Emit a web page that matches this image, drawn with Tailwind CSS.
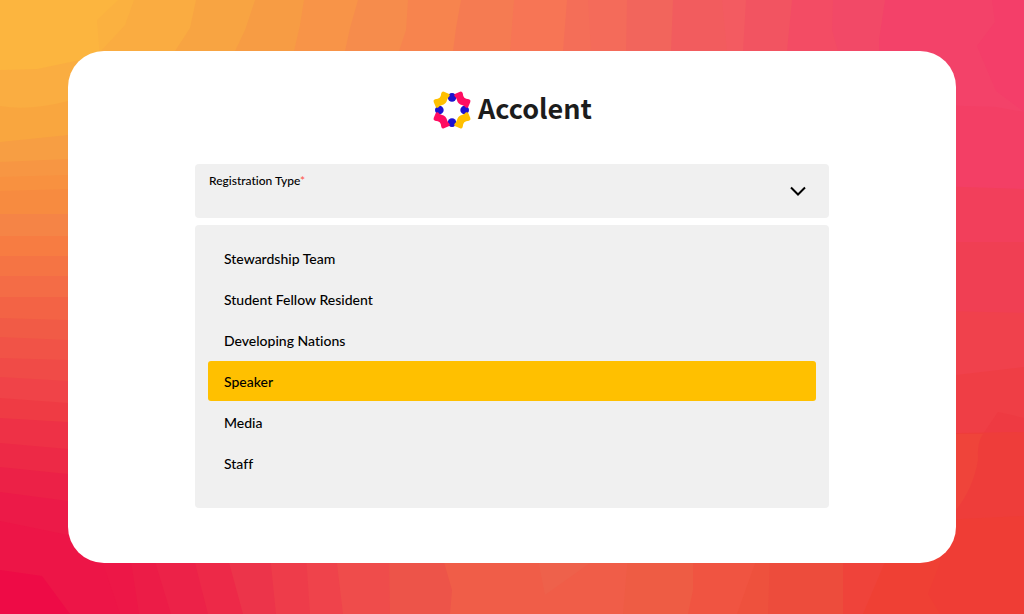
<!DOCTYPE html>
<html lang="en">
<head>
  <meta charset="UTF-8">
  <title>Accolent - Registration</title>
  <meta name="viewport" content="width=device-width, initial-scale=1">
  <script src="https://cdn.jsdelivr.net/npm/@tailwindcss/browser@4"></script>
</head>
<body class="relative isolate min-h-screen flex flex-col px-[68px] py-[51px] text-black font-['Lato','Liberation_Sans',sans-serif] bg-[#fcb53f]">
  <!-- banded backdrop, every band covers the rest of the side it starts on -->
  <svg class="absolute inset-0 -z-10 w-full h-full" viewBox="0 0 1024 614" preserveAspectRatio="none" aria-hidden="true">
    <!-- top -->
    <path fill="#fbb140" d="M118 0 97 20 100 60H1024V0Z"></path>
    <path fill="#faac41" d="M134 0 125 25 100 52V60H1024V0Z"></path>
    <path fill="#f8a442" d="M196 0 190 28 175 51V60H1024V0Z"></path>
    <path fill="#f79c44" d="M255 0 245 30 235 51V60H1024V0Z"></path>
    <path fill="#f89448" d="M304 0 300 25 294 51V60H1024V0Z"></path>
    <path fill="#f68c4c" d="M358 0 350 28 345 51V60H1024V0Z"></path>
    <path fill="#f7844e" d="M408 0 406 30 399 51V60H1024V0Z"></path>
    <path fill="#f57b52" d="M461 0 456 28 453 51V60H1024V0Z"></path>
    <path fill="#f77555" d="M514 0 510 51V60H1024V0Z"></path>
    <path fill="#f46e58" d="M567 0 563 51V60H1024V0Z"></path>
    <path fill="#f46b5a" d="M588 0 591 51V60H1024V0Z"></path>
    <path fill="#f2655c" d="M627 0 626 51V60H1024V0Z"></path>
    <path fill="#f25c5e" d="M673 0 671 51V60H1024V0Z"></path>
    <path fill="#f35b61" d="M722 0 727 51V60H1024V0Z"></path>
    <path fill="#f25461" d="M746 0 743 51V60H1024V0Z"></path>
    <path fill="#f34c64" d="M792 0 787 51V60H1024V0Z"></path>
    <path fill="#f24967" d="M833 0 832 30 838 51V60H1024V0Z"></path>
    <path fill="#f34269" d="M885 0 879 40V200H1024V0Z"></path>
    <path fill="#f43e69" d="M992 0 995 22 977 46 996 91 1024 112V0Z"></path>
    <!-- right -->
    <path fill="#f33f65" d="M900 104 996 107 1024 112V614H900Z"></path>
    <path fill="#f23f5b" d="M900 185 1024 189V614H900Z"></path>
    <path fill="#f03f53" d="M900 242H1024V614H900Z"></path>
    <path fill="#f0414c" d="M900 310 1024 313V614H900Z"></path>
    <path fill="#ef3e45" d="M900 378 956 375 1024 367V614H900Z"></path>
    <path fill="#ee3a42" d="M983 434 998 412 1024 418V442H983Z"></path>
    <path fill="#ee3d3a" d="M900 434 1024 432V614H900Z"></path>
    <path fill="#ef443a" d="M940 434H983Q977 442 978 460 973 489 956 510H940Z"></path>
    <path fill="#ef3d35" d="M900 522 1024 516V614H900Z"></path>
    <!-- left -->
    <path fill="#faad41" d="M0 70 37 69 80 60 110 54V614H0Z"></path>
    <path fill="#f9a63f" d="M0 106Q30 111 68 101H110V614H0Z"></path>
    <path fill="#f79e43" d="M0 142 68 135H110V614H0Z"></path>
    <path fill="#f79643" d="M0 162 68 159H110V614H0Z"></path>
    <path fill="#f89140" d="M0 177 68 175H110V614H0Z"></path>
    <path fill="#f78b40" d="M0 191 68 189H110V614H0Z"></path>
    <path fill="#f58446" d="M0 214H110V614H0Z"></path>
    <path fill="#f77c42" d="M0 236H110V614H0Z"></path>
    <path fill="#f57444" d="M0 256H110V614H0Z"></path>
    <path fill="#f46c46" d="M0 276H110V614H0Z"></path>
    <path fill="#f36345" d="M0 297H110V614H0Z"></path>
    <path fill="#f15b46" d="M0 318 68 320H110V614H0Z"></path>
    <path fill="#f15347" d="M0 337 68 340H110V614H0Z"></path>
    <path fill="#f04b47" d="M0 358 68 360H110V614H0Z"></path>
    <path fill="#f04348" d="M0 377 68 381H110V614H0Z"></path>
    <path fill="#ef3b44" d="M0 398 68 403H110V614H0Z"></path>
    <path fill="#ee3146" d="M0 418 68 422H110V614H0Z"></path>
    <path fill="#ed2946" d="M0 443 68 449H110V614H0Z"></path>
    <path fill="#ec2147" d="M0 467 68 474H110V614H0Z"></path>
    <path fill="#ec1a48" d="M0 492 68 501H130V614H0Z"></path>
    <path fill="#ed1547" d="M0 521 68 535 130 545V614H0Z"></path>
    <path fill="#ee0b46" d="M0 570 42 576 70 614H0Z"></path>
    <!-- bottom -->
    <path fill="#ed1747" d="M100 555 120 614H900V555Z"></path>
    <path fill="#ec1c47" d="M130 555 139 614H900V555Z"></path>
    <path fill="#ec2248" d="M153 555 171 614H900V555Z"></path>
    <path fill="#ed2948" d="M193 555 208 614H900V555Z"></path>
    <path fill="#ec344a" d="M227 555 243 614H900V555Z"></path>
    <path fill="#ee3c4a" d="M270 555 276 614H900V555Z"></path>
    <path fill="#ef434b" d="M306 555 310 614H900V555Z"></path>
    <path fill="#ef4c4b" d="M336 555 343 614H900V555Z"></path>
    <path fill="#ed5449" d="M389 555 390 614H900V555Z"></path>
    <path fill="#f05d48" d="M442 555 452 590 450 614H900V555Z"></path>
    <path fill="#ee614b" d="M537 555 545 595 590 563V555Z"></path>
    <path fill="#ee5c44" d="M628 555 623 614H900V555Z"></path>
    <path fill="#f05441" d="M693 555V590L688 614H900V555Z"></path>
    <path fill="#ee513d" d="M758 555 737 614H900V555Z"></path>
    <path fill="#ed4c3c" d="M770 555 768 614H940V555Z"></path>
    <path fill="#ef433a" d="M843 555V614H940V555Z"></path>
    <path fill="#ef4034" d="M888 555 863 614H940V555Z"></path>
    <path fill="#ef3d35" d="M940 555V563L928 594 940 614H960V555Z"></path>
  </svg>

  <main class="flex-1 bg-white rounded-[36px] px-[127px] pt-[39px] pb-[55px]">
    <h1 class="flex items-start justify-center gap-[6px] mb-[34px]">
      <svg class="w-10 h-10" viewBox="0 0 120 120" aria-hidden="true">
        <g fill="#1d12d0">
          <circle cx="60" cy="22" r="13"></circle>
          <circle cx="98" cy="60" r="13"></circle>
          <circle cx="60" cy="98" r="13"></circle>
          <circle cx="22" cy="60" r="13"></circle>
        </g>
        <defs>
          <path id="arm" d="M70 11 84 5Q90 3 92 9 93 19 97 23 101 27 111 28 117 30 115 36L109 50Q107 55 102 53 98 48 92 46 84 44 80 40 76 36 74 28 72 22 67 18 65 13 70 11Z"></path>
        </defs>
        <use href="#arm" fill="#ff0d61"></use>
        <use href="#arm" fill="#ffc000" transform="rotate(90 60 60)"></use>
        <use href="#arm" fill="#ff0d61" transform="rotate(180 60 60)"></use>
        <use href="#arm" fill="#ffc000" transform="rotate(270 60 60)"></use>
      </svg>
      <span class="text-[27px] leading-9 font-bold text-[#1c1c1c] font-['Noto_Sans_CJK_SC','Open_Sans',sans-serif]">Accolent</span>
    </h1>

    <form>
      <div class="grid items-center">
        <select id="registrationType" required class="col-start-1 row-start-1 w-full h-[54px] px-[14px] pt-5 appearance-none rounded bg-[#f0f0f0] text-sm">
          <option value=""></option>
        </select>
        <label for="registrationType" class="col-start-1 row-start-1 self-start px-[14px] pt-2 text-[12px] leading-[18px] font-medium [font-variant-ligatures:none] pointer-events-none">Registration Type<span class="text-[#ff5a4f]">*</span></label>
        <svg class="col-start-1 row-start-1 justify-self-end mr-[21px] w-5 h-5 pointer-events-none" viewBox="0 0 20 20" fill="none" stroke="currentColor" stroke-width="2" aria-hidden="true">
          <path d="M3 6.500 10 13.500 17 6.500"></path>
        </svg>
      </div>

      <div role="listbox" aria-label="Registration Type" class="mt-[7px] px-[13px] pt-[13px] pb-[25px] flex flex-col gap-px rounded bg-[#f0f0f0] text-[14px] leading-5 font-medium [font-variant-ligatures:none]">
        <button type="button" role="option" class="h-10 px-4 pt-[2px] rounded-[3px] text-left hover:bg-[#ffc000]">Stewardship Team</button>
        <button type="button" role="option" class="h-10 px-4 pt-[2px] rounded-[3px] text-left hover:bg-[#ffc000]">Student Fellow Resident</button>
        <button type="button" role="option" class="h-10 px-4 pt-[2px] rounded-[3px] text-left hover:bg-[#ffc000]">Developing Nations</button>
        <button type="button" role="option" aria-selected="true" class="h-10 px-4 pt-[2px] rounded-[3px] text-left bg-[#ffc000]">Speaker</button>
        <button type="button" role="option" class="h-10 px-4 pt-[2px] rounded-[3px] text-left hover:bg-[#ffc000]">Media</button>
        <button type="button" role="option" class="h-10 px-4 pt-[2px] rounded-[3px] text-left hover:bg-[#ffc000]">Staff</button>
      </div>
    </form>
  </main>
</body>
</html>
